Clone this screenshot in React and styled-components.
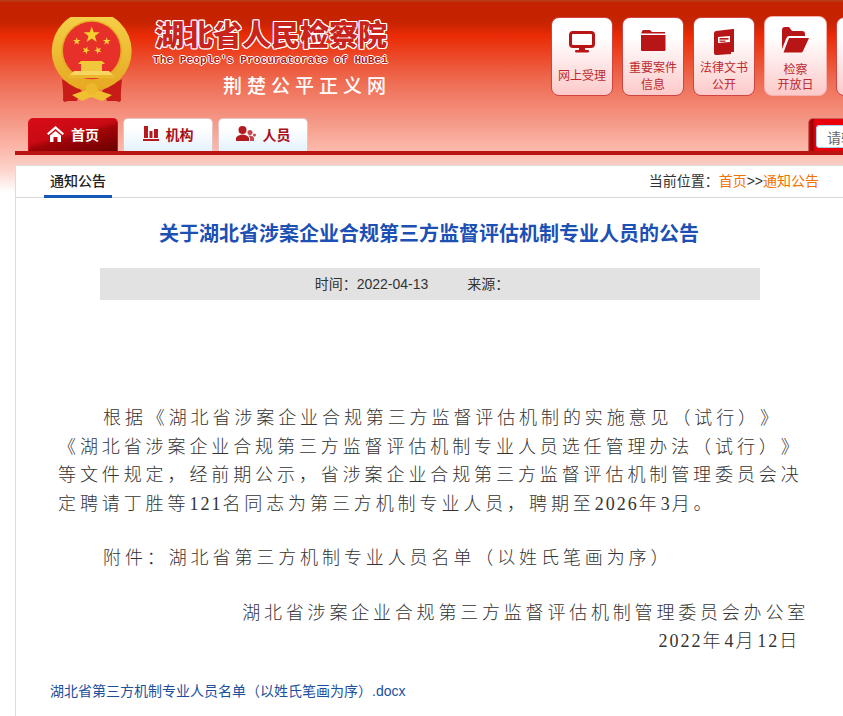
import React from 'react'
import styled, { createGlobalStyle } from 'styled-components'

const GlobalStyle = createGlobalStyle`
html, body {
  margin: 0;
  padding: 0;
  background: #fff;
  overflow: hidden;
}
* {
  box-sizing: border-box;
}
`

const Page = styled.div`
width: 843px;
height: 716px;
overflow: hidden;
font-family: "Liberation Sans", "Noto Sans CJK SC", sans-serif;
background: linear-gradient(to bottom, #b8401c 0, #c42200 3px, #c62300 22px, #ea2b06 36px, #ee6a50 80px, #f4917f 115px, #fcb9ab 150px, #fcd4cc 170px, #fff 192px);
`

const TopBar = styled.header`
display: flex;
align-items: flex-start;
height: 118px;
padding: 17px 0 0 50px;
`

const Brand = styled.div`
display: flex;
flex-direction: column;
width: 238px;
margin-left: 21px;
flex: none;
`

const BrandTitle = styled.div`
font-family: "Noto Sans CJK SC", sans-serif;
font-size: 29px;
font-weight: 900;
line-height: 33px;
margin-top: 0;
white-space: nowrap;
color: #c9241c;
text-shadow: 1px 0 0 #fff, -1px 0 0 #fff, 0 1px 0 #fff, 0 -1px 0 #fff, 1px 1px 0 #fff, -1px -1px 0 #fff, 1px -1px 0 #fff, -1px 1px 0 #fff;
`

const BrandEnglish = styled.div`
font-family: "Liberation Mono", monospace;
font-size: 11.2px;
font-weight: 700;
line-height: 14px;
margin: 3px 0 0 -2px;
white-space: nowrap;
color: #b51a14;
text-shadow: 1px 0 0 #fff, -1px 0 0 #fff, 0 1px 0 #fff, 0 -1px 0 #fff;
`

const BrandSlogan = styled.div`
font-family: "Noto Sans CJK SC", sans-serif;
font-size: 19px;
font-weight: 500;
line-height: 26px;
margin: 5px 0 0 68px;
letter-spacing: 5px;
white-space: nowrap;
color: #fff;
`

const QuickLinks = styled.nav`
display: flex;
gap: 9px;
margin-left: 158px;
flex: none;
`

const QuickCard = styled.a`
display: flex;
flex-direction: column;
align-items: center;
flex: none;
width: ${p => (p.$soft ? '63px' : '62px')};
height: ${p => (p.$soft ? '80px' : '79px')};
margin-top: ${p => (p.$soft ? '-1px' : '0')};
padding-top: 9px;
border: 1px solid ${p => (p.$soft ? '#f6b0ac' : '#cd4443')};
border-radius: 8px;
background: linear-gradient(to bottom, #fff 0, #fff 25%, #fdc9c9 100%);
color: #bb2a30;
font-size: 12px;
`

const QuickIcon = styled.div`
display: flex;
align-items: center;
justify-content: center;
height: 30px;
flex: none;
color: #b71516;
`

const QuickLabel = styled.div`
flex: 1;
display: flex;
flex-direction: column;
justify-content: center;
padding-top: ${p => (p.$low ? '4px' : '1px')};
text-align: center;
line-height: ${p => (p.$low ? '15px' : '17px')};
`

const NavRow = styled.div`
display: flex;
align-items: flex-end;
height: 33px;
padding-left: 28px;
`

const Tab = styled.a`
display: flex;
align-items: center;
justify-content: center;
gap: 7px;
flex: none;
width: 90px;
height: 33px;
margin-right: 5px;
padding-bottom: 3px;
border: 1px solid ${p => (p.$active ? '#d8101a' : '#e4c4c4')};
border-bottom: none;
border-radius: 5px 5px 0 0;
font-size: 14px;
font-weight: 700;
color: ${p => (p.$active ? '#fff' : '#a8101c')};
background: ${p => (p.$active
    ? 'linear-gradient(165deg, #d70c18 0, #c80a14 45%, #a00408 55%, #6c0000 100%)'
    : 'linear-gradient(to bottom, #fff 0, #fff 30%, #e4f2fc 100%)')};
`

const SearchTab = styled.div`
flex: none;
width: 200px;
height: 33px;
margin-left: 495px;
padding: 6px 0 3px 7px;
border-radius: 5px 0 0 0;
border-top: 1px solid #c8615a;
border-left: 1px solid #c8615a;
background: linear-gradient(to right, #e8000a 0, #8c0808 3px, #e8000a 6px, #f20008 100%);
`

const SearchInput = styled.input`
display: block;
width: 180px;
height: 23px;
padding: 0 10px;
border: 1px solid #a8d0ec;
border-radius: 3px;
background: #fff;
font-family: "Noto Sans CJK SC", sans-serif;
font-size: 14px;
color: #666;
&::placeholder {
  color: #666;
  opacity: 1;
}
`

const RedLine = styled.div`
height: 4px;
margin: 0 0 10px 15px;
background: #b81414;
`

const Panel = styled.main`
width: 830px;
height: 552px;
margin-left: 15px;
background: #fff;
border-left: 1px solid #dcdcdc;
border-top: 1px solid #dcdcdc;
`

const PanelHead = styled.div`
display: flex;
justify-content: space-between;
align-items: stretch;
height: 32px;
padding: 0 26px 0 28px;
border-bottom: 1px solid #d8d8d8;
`

const PanelTab = styled.div`
height: 32px;
padding: 0 6px;
border-bottom: 3px solid #1558b8;
font-size: 14px;
font-weight: 500;
line-height: 30px;
color: #222;
`

const Crumbs = styled.div`
font-size: 14px;
line-height: 30px;
color: #333;
`

const CrumbLink = styled.a`
color: #f27200;
`

const Article = styled.article`
padding: 0 0 0 42px;
`

const Title = styled.h1`
margin: 0;
padding: 20px 0 0;
width: 742px;
font-family: "Noto Sans CJK SC", sans-serif;
font-size: 20px;
font-weight: 700;
line-height: 30px;
text-align: center;
color: #1c50b4;
`

const MetaBar = styled.div`
display: flex;
justify-content: center;
gap: 39px;
width: 660px;
height: 32px;
margin: 20px 0 0 42px;
padding-right: 36px;
background: #e2e2e2;
font-size: 14px;
line-height: 32px;
color: #333;
`

const Body = styled.div`
width: 745px;
margin-top: 104px;
font-family: "Liberation Serif", "Noto Sans CJK SC", serif;
font-size: 18px;
font-weight: 300;
line-height: 28.5px;
letter-spacing: 3.9px;
text-spacing-trim: space-all;
color: #333;
`

const Para = styled.p`
margin: 0 0 26px;
text-indent: 45px;
`

const Num = styled.span`
letter-spacing: 2px;
`

const Signature = styled.div`
width: 751px;
text-align: right;
white-space: nowrap;
letter-spacing: 3.8px;
padding-right: ${p => p.$inset || 0}px;
`

const FileLink = styled.a`
display: block;
margin: 25px 0 0 -8px;
font-size: 14px;
line-height: 20px;
color: #1c4f9c;
`

const starPoints = (cx, cy, r, turn = 0) => {
  const pts = []
  for (let i = 0; i < 10; i++) {
    const radius = i % 2 ? r * 0.4 : r
    const a = -Math.PI / 2 + turn + (i * Math.PI) / 5
    pts.push(`${(cx + radius * Math.cos(a)).toFixed(2)},${(cy + radius * Math.sin(a)).toFixed(2)}`)
  }
  return pts.join(' ')
}

const Emblem = () => (
  <svg width="84" height="86" viewBox="0 0 84 86" style={{ flex: 'none' }}>
    <defs>
      <linearGradient id="gold" x1="0" y1="0" x2="0" y2="1">
        <stop offset="0" stopColor="#f6d24a" />
        <stop offset="1" stopColor="#e3a820" />
      </linearGradient>
    </defs>
    <path d="M12 62 L30 72 L36 80 L14 85 Z" fill="#c81c18" />
    <path d="M72 62 L54 72 L48 80 L70 85 Z" fill="#c81c18" />
    <circle cx="41.7" cy="34" r="40" fill="url(#gold)" />
    <circle cx="41.7" cy="34" r="30.5" fill="#e9ab25" />
    <circle cx="41.7" cy="33.5" r="28.8" fill="#e8302a" />
    <polygon points={starPoints(41.7, 18, 8.5)} fill="#f6d030" />
    <polygon points={starPoints(26.7, 24.3, 4)} fill="#f6d030" />
    <polygon points={starPoints(56.7, 24.3, 4)} fill="#f6d030" />
    <polygon points={starPoints(36, 33.3, 4, 0.4)} fill="#f6d030" />
    <polygon points={starPoints(48, 33.3, 4, -0.4)} fill="#f6d030" />
    <path d="M28 47 L55 47 L52 44 L31 44 Z" fill="#f3c838" />
    <rect x="31" y="47" width="21" height="7" fill="#f0c63c" />
    <path d="M20 58 L24 54 L59 54 L63 58 Z" fill="#f6d660" />
    <rect x="18" y="58" width="47" height="3" fill="#eab72f" />
    <path d="M22 62 Q41 72 62 62 L62 68 Q41 74 22 68 Z" fill="#e9ab25" />
    <path d="M14 66 Q20 74 30 75 L27 84 L13 84 Z" fill="#c81c18" />
    <path d="M70 66 Q64 74 54 75 L57 84 L71 84 Z" fill="#c81c18" />
    <path d="M22 78 L41 71 L62 78 L52 84 L41 80 L32 84 Z" fill="#f0c030" />
    <circle cx="41.7" cy="72" r="6" fill="#eeb82c" />
  </svg>
)

const MonitorIcon = () => (
  <svg width="26" height="22" viewBox="0 0 26 22">
    <rect x="1.5" y="1.5" width="23" height="14" rx="2.5" fill="none" stroke="currentColor" strokeWidth="3" />
    <rect x="10" y="16" width="6" height="3.5" fill="currentColor" />
    <rect x="6" y="19" width="14" height="2.5" rx="1" fill="currentColor" />
  </svg>
)

const FolderIcon = () => (
  <svg width="25" height="24" viewBox="0 0 25 24">
    <path d="M0 4 L1 1 Q1.5 0 3 0 L9 0 L11 2 L24 2 L24 3.5 L0 3.5 Z" fill="currentColor" />
    <path d="M0 5 L24.5 5 L24.5 20 Q24.5 21 23.5 21 L1 21 Q0 21 0 20 Z" fill="currentColor" />
  </svg>
)

const BookIcon = () => (
  <svg width="21" height="26" viewBox="0 0 21 26">
    <path d="M2 2 L19 0 L20 0 L20 23 L17 23 L17 25 L3 26 Q0 26 0 24 L0 4 Q0 2.4 2 2 Z" fill="currentColor" />
    <path d="M4 8 L16 7 L16 13 L4 14 Z" fill="#fff" />
    <rect x="5.5" y="9" width="9" height="1.6" fill="currentColor" />
    <rect x="5.5" y="11.6" width="6" height="1.2" fill="currentColor" />
  </svg>
)

const FolderOpenIcon = () => (
  <svg width="27" height="28" viewBox="0 0 27 28">
    <path d="M0 3 Q0 0 3 0 L7 0 L10 4 L20 4 Q23 4 23 7 L23 9 L7 9 Q5 9 4 12 L0 22 Z" fill="currentColor" />
    <path d="M7 11 L27 11 L21 24 Q20.5 25.5 19 25.5 L1.5 25.5 Z" fill="currentColor" />
  </svg>
)

const HomeIcon = () => (
  <svg width="17" height="16" viewBox="0 0 17 16">
    <path d="M8.5 0 L17 7.5 L15.5 9 L8.5 3 L1.5 9 L0 7.5 Z" fill="#fff" />
    <path d="M3 9.5 L8.5 5 L14 9.5 L14 16 L10.5 16 L10.5 11 L6.5 11 L6.5 16 L3 16 Z" fill="#fff" />
  </svg>
)

const BarsIcon = () => (
  <svg width="16" height="15" viewBox="0 0 16 15">
    <rect x="1" y="0" width="4" height="12" fill="#b51a1e" />
    <rect x="6.5" y="5" width="3" height="7" fill="#b51a1e" />
    <rect x="11" y="3" width="4" height="9" fill="#b51a1e" />
    <rect x="0" y="13" width="16" height="2" fill="#b51a1e" />
  </svg>
)

const UsersIcon = () => (
  <svg width="20" height="15" viewBox="0 0 20 15">
    <circle cx="6.5" cy="4" r="4" fill="#b51a1e" />
    <path d="M0 15 L0 12 Q1 9 6.5 8.5 Q12 9 13 12 L13 15 Z" fill="#b51a1e" />
    <circle cx="14" cy="6.5" r="2.5" fill="#c4484a" />
    <path d="M14 15 L14 12 Q13.5 10.5 12.5 9.5 Q17 9 18 12 L18 15 Z" fill="#c4484a" />
    <circle cx="18.5" cy="9" r="1.5" fill="#c4484a" />
  </svg>
)

const quickLinks = [
  { icon: <MonitorIcon />, lines: ['网上受理'] },
  { icon: <FolderIcon />, lines: ['重要案件', '信息'] },
  { icon: <BookIcon />, lines: ['法律文书', '公开'] },
  { icon: <FolderOpenIcon />, lines: ['检察', '开放日'], soft: true, low: true },
  { icon: null, lines: [] },
]

const App = () => {
  return (
    <Page lang="zh-CN">
      <GlobalStyle />
      <TopBar>
        <Emblem />
        <Brand>
          <BrandTitle>湖北省人民检察院</BrandTitle>
          <BrandEnglish>The People's Procuratorate of HuBei</BrandEnglish>
          <BrandSlogan>荆楚公平正义网</BrandSlogan>
        </Brand>
        <QuickLinks>
          {quickLinks.map((item, i) => (
            <QuickCard key={i} $soft={item.soft}>
              <QuickIcon>{item.icon}</QuickIcon>
              <QuickLabel $low={item.low}>
                {item.lines.map(line => (
                  <div key={line}>{line}</div>
                ))}
              </QuickLabel>
            </QuickCard>
          ))}
        </QuickLinks>
      </TopBar>
      <NavRow>
        <Tab $active><HomeIcon />首页</Tab>
        <Tab><BarsIcon />机构</Tab>
        <Tab><UsersIcon />人员</Tab>
        <SearchTab>
          <SearchInput placeholder="请输入关键字" />
        </SearchTab>
      </NavRow>
      <RedLine />
      <Panel>
        <PanelHead>
          <PanelTab>通知公告</PanelTab>
          <Crumbs>
            当前位置：<CrumbLink>首页</CrumbLink>&gt;&gt;<CrumbLink>通知公告</CrumbLink>
          </Crumbs>
        </PanelHead>
        <Article>
          <Title>关于湖北省涉案企业合规第三方监督评估机制专业人员的公告</Title>
          <MetaBar>
            <span>时间：2022-04-13</span>
            <span>来源：</span>
          </MetaBar>
          <Body>
            <Para>
              根据《湖北省涉案企业合规第三方监督评估机制的实施意见（试行）》《湖北省涉案企业合规第三方监督评估机制专业人员选任管理办法（试行）》等文件规定，经前期公示，省涉案企业合规第三方监督评估机制管理委员会决定聘请丁胜等<Num>121</Num>名同志为第三方机制专业人员，聘期至<Num>2026</Num>年<Num>3</Num>月。
            </Para>
            <Para>附件：湖北省第三方机制专业人员名单（以姓氏笔画为序）</Para>
            <Signature>湖北省涉案企业合规第三方监督评估机制管理委员会办公室</Signature>
            <Signature $inset={8}><Num>2022</Num>年<Num>4</Num>月<Num>12</Num>日</Signature>
          </Body>
          <FileLink>湖北省第三方机制专业人员名单（以姓氏笔画为序）.docx</FileLink>
        </Article>
      </Panel>
    </Page>
  )
}

export default App
